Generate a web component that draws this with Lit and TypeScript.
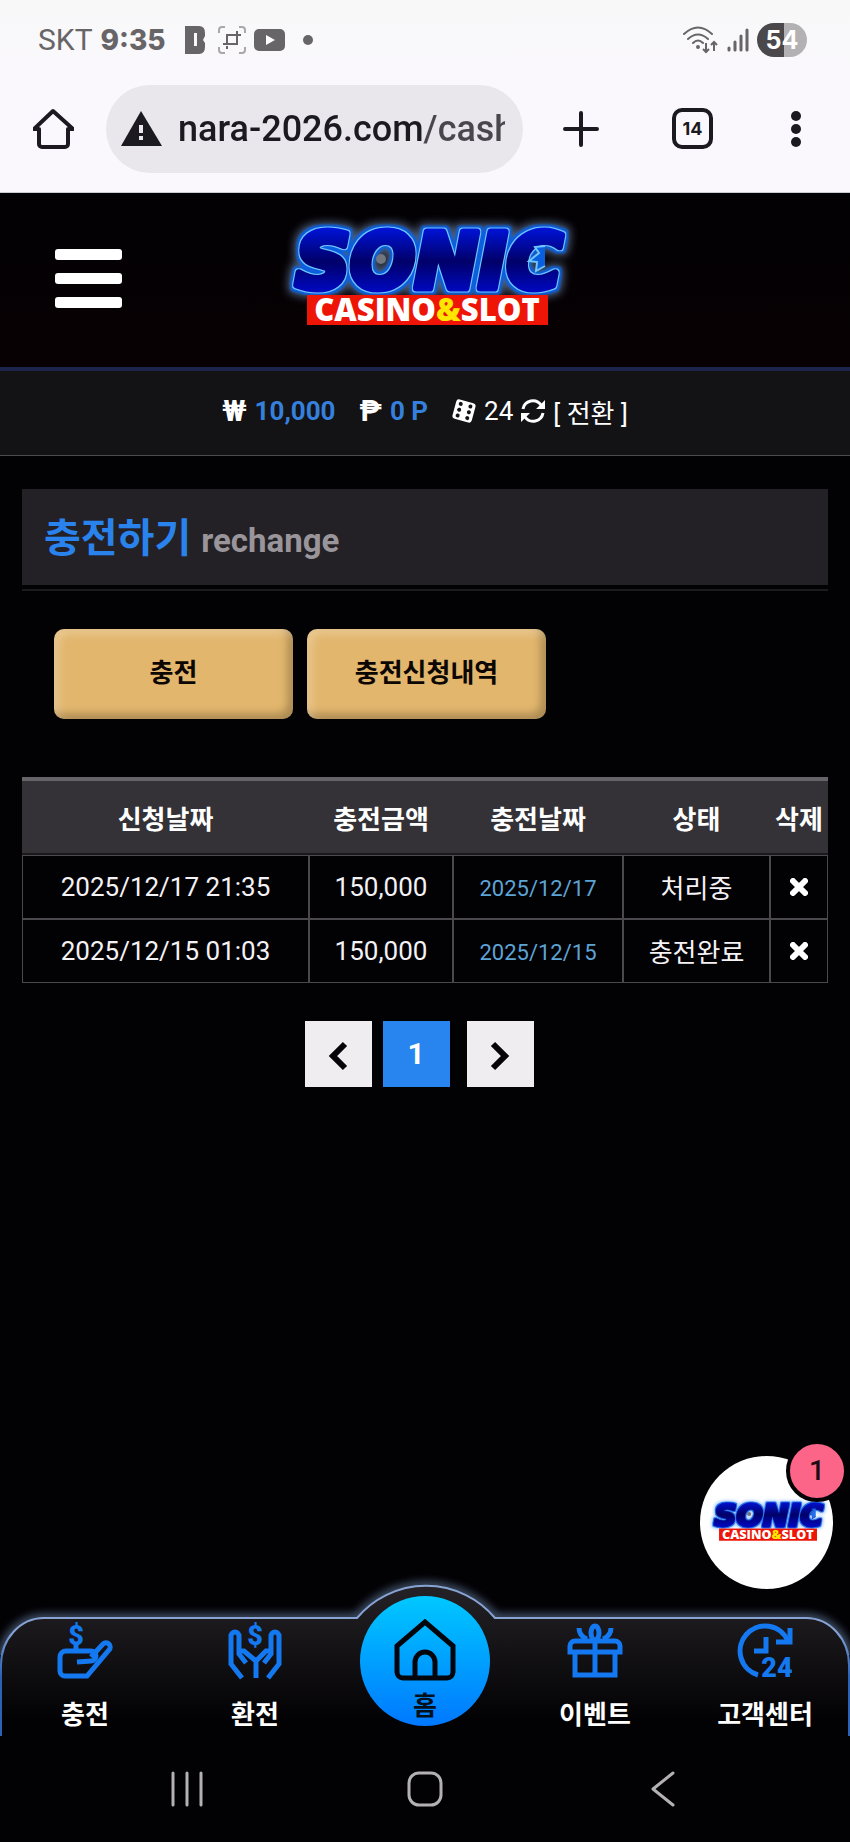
import { LitElement, html, css, svg } from 'lit';
import { customElement, property } from 'lit/decorators.js';

const icons = {
    charge: svg`
        <path d="M33 27H8a6 6 0 0 0-6 6v14a5 5 0 0 0 5 5h22L51 26a4 4 0 0 0-6-6L33 33"/>
        <path d="M33 27a5 5 0 0 1 0 10l-14 1"/>
        <path d="M18 20v6"/>
        <text x="18" y="21" text-anchor="middle">$</text>`,
    exchange: svg`
        <path d="M14 54L3 40V12a4 4 0 0 1 8 0v18l7 9"/>
        <path d="M40 54l11-14V12a4 4 0 0 0-8 0v18l-7 9"/>
        <path d="M11 27h5l12 10v17M43 27h-5L28 37"/>
        <text x="27" y="21" text-anchor="middle">$</text>`,
    event: svg`
        <path d="M2 28V22a5 5 0 0 1 5-5h40a5 5 0 0 1 5 5v6z"/>
        <path d="M7 30v21h40V30M27 15v36"/>
        <ellipse cx="27" cy="9" rx="4" ry="7"/>
        <path d="M11 4c0 6 3 9 8 11M43 4c0 6-3 9-8 11"/>`,
    support: svg`
        <path d="M20 51A25 25 0 1 1 50 17"/>
        <path d="M52 4v14H38M28 13v14H16"/>
        <text x="39" y="53" text-anchor="middle">24</text>`
};

@customElement('site-logo')
export class SiteLogo extends LitElement {

    @property({ type: Boolean, reflect: true }) light = false;

    static styles = css`
        :host { display: block; --halo: #4d5d78; --edge: #0a5fe0; --rim: #6fc6ff; }
        :host([light]) { --halo: #a9ccff; --edge: #2470ea; --rim: #1146c8; }
        svg { display: block; width: 100%; overflow: visible; }
        .name {
            font: oblique 700 76px 'DejaVu Sans', sans-serif;
            fill: url(#face);
            stroke: url(#face);
            stroke-width: 7px;
            stroke-linejoin: round;
            filter: url(#neon);
        }
        .halo { flood-color: var(--halo); }
        .edge { flood-color: var(--edge); }
        .rim { flood-color: var(--rim); }
        .spikes { fill: var(--edge); stroke: var(--rim); stroke-width: 2px; }
        .sub { font: 800 31px 'Open Sans', sans-serif; fill: #fff; }
        .amp { fill: #ffe600; }
    `;

    render() {
        return html`
        <svg viewBox="0 0 310 140" role="img" aria-label="SONIC CASINO&SLOT">
            <defs>
                <linearGradient id="face" x1="0" y1="0" x2="0" y2="1">
                    <stop offset="0.1" stop-color="#0014e0"/>
                    <stop offset="0.5" stop-color="#000068"/>
                    <stop offset="0.9" stop-color="#000ad0"/>
                </linearGradient>
                <filter id="neon" x="-10%" y="-20%" width="120%" height="140%" color-interpolation-filters="sRGB">
                    <feMorphology in="SourceAlpha" operator="dilate" radius="5" result="wide"/>
                    <feGaussianBlur in="wide" stdDeviation="4" result="soft"/>
                    <feFlood class="halo"/><feComposite in2="soft" operator="in" result="halo"/>
                    <feMorphology in="SourceAlpha" operator="dilate" radius="3" result="mid"/>
                    <feGaussianBlur in="mid" stdDeviation="1" result="midsoft"/>
                    <feFlood class="edge"/><feComposite in2="midsoft" operator="in" result="edge"/>
                    <feMorphology in="SourceAlpha" operator="dilate" radius="1" result="thin"/>
                    <feFlood class="rim"/><feComposite in2="thin" operator="in" result="rim"/>
                    <feMerge>
                        <feMergeNode in="halo"/><feMergeNode in="edge"/><feMergeNode in="rim"/><feMergeNode in="SourceGraphic"/>
                    </feMerge>
                </filter>
            </defs>
            <text class="name" x="159" y="78" text-anchor="middle">SONIC</text>
            <path class="spikes" d="M275 36l-10 1 4 6-10 8 8 1-1 9 9-5"/>
            <circle cx="111" cy="49" r="5" fill="#70757f"/>
            <rect x="37" y="85" width="241" height="30" fill="#ee1506"/>
            <text class="sub" x="157" y="111" text-anchor="middle">CASINO<tspan class="amp">&amp;</tspan>SLOT</text>
        </svg>
        `;
    }
}

@customElement('phone-status')
export class PhoneStatus extends LitElement {

    static styles = css`
        :host {
            display: flex;
            align-items: center;
            justify-content: space-between;
            height: 80px;
            padding: 0 43px 0 38px;
            color: #676568;
            font-family: Roboto, sans-serif;
            background: linear-gradient(#f8f8f8, #faf8fd);
        }
        .side { display: flex; align-items: center; gap: 8px; }
        .carrier { font-size: 30px; font-weight: 400; }
        .time { font: 800 28px Inter, sans-serif; margin-right: 10px; }
        .dot { width: 10px; height: 10px; border-radius: 50%; margin-left: 10px; background: #676568; }
        .battery {
            display: flex;
            align-items: center;
            justify-content: center;
            width: 50px;
            height: 34px;
            border-radius: 17px;
            color: #fff;
            font: 700 25px Inter, sans-serif;
            background: linear-gradient(to right, #4a484b 54%, #b3b1b4 54%);
        }
        svg { display: block; }
    `;

    render() {
        return html`
        <div class="side">
            <span class="carrier">SKT</span>
            <span class="time">9:35</span>
            <svg width="26" height="28" viewBox="0 0 26 28">
                <path fill="#676568" fill-rule="evenodd" d="M1 0h14q6 0 6 7v3l-2 4 2 3v4q0 7-6 7H1zM10 7v13h3V7z"/>
            </svg>
            <svg width="28" height="28" viewBox="0 0 28 28" fill="none" stroke="#a9a7ab" stroke-width="2">
                <path d="M1 7V4a3 3 0 0 1 3-3h3M21 1h3a3 3 0 0 1 3 3v3M27 21v3a3 3 0 0 1-3 3h-3M7 27H4a3 3 0 0 1-3-3v-3"/>
                <path stroke="#676568" d="M9 18V9h14M5 18h14V9M9 20v3M19 5v3"/>
            </svg>
            <svg width="31" height="22" viewBox="0 0 31 22">
                <rect width="31" height="22" rx="5" fill="#676568"/>
                <path d="M12 6l9 5-9 5z" fill="#fff"/>
            </svg>
            <span class="dot"></span>
        </div>
        <div class="side">
            <svg width="36" height="28" viewBox="0 0 36 28" fill="none" stroke="#676568" stroke-width="2">
                <path d="M1 8q14-13 28 0M5 13q10-9 20 0M10 17q5-5 10 0" stroke-linecap="round"/>
                <circle cx="15" cy="21" r="1"/>
                <path d="M23 17v9M20 23l3 3 3-3M31 25v-9M28 19l3-3 3 3"/>
            </svg>
            <svg width="22" height="24" viewBox="0 0 22 24" stroke="#676568" stroke-width="3" stroke-linecap="round">
                <path d="M2 20v2M8 14v8M14 8v14M20 2v20"/>
            </svg>
            <span class="battery">54</span>
        </div>
        `;
    }
}

@customElement('browser-bar')
export class BrowserBar extends LitElement {

    static styles = css`
        :host {
            display: flex;
            align-items: center;
            height: 97px;
            padding: 0 44px 15px 33px;
            border-bottom: 1px solid #c9ccd0;
            background: #faf8fd;
        }
        button {
            display: block;
            flex: none;
            padding: 0;
            border: 0;
            color: #1b1a20;
            background: none;
        }
        svg { display: block; }
        .address {
            flex: 1;
            min-width: 0;
            display: flex;
            align-items: center;
            gap: 16px;
            height: 88px;
            margin: 0 40px 0 32px;
            padding: 0 18px 0 15px;
            box-sizing: border-box;
            border-radius: 44px;
            background: #e9e7ec;
        }
        input {
            flex: 1;
            min-width: 0;
            height: 60px;
            padding: 0;
            border: 0;
            outline: 0;
            font: 500 36px Roboto, sans-serif;
            background: linear-gradient(to right, #1b1a20 246px, #49474d 246px);
            background-clip: text;
            -webkit-background-clip: text;
            -webkit-text-fill-color: transparent;
        }
        .tabs {
            width: 41px;
            height: 41px;
            margin: 0 73px;
            border: 4px solid #1b1a20;
            border-radius: 10px;
            font: 700 18px Inter, sans-serif;
        }
    `;

    render() {
        return html`
        <button aria-label="홈">
            <svg width="41" height="41" viewBox="0 0 41 41" fill="none" stroke="currentColor" stroke-width="4" stroke-linejoin="round">
                <path d="M1 21h5v15a3 3 0 0 0 3 3h23a3 3 0 0 0 3-3V21h5L20 3z"/>
            </svg>
        </button>
        <div class="address">
            <svg width="41" height="36" viewBox="0 0 41 36">
                <path d="M20 0l21 35H0z" fill="#1b1a20"/>
                <path d="M18 14h4v8h-4zM18 25h4v4h-4z" fill="#e9e7ec"/>
            </svg>
            <input type="text" aria-label="주소" value="nara-2026.com/cash">
        </div>
        <button aria-label="새 탭">
            <svg width="36" height="36" viewBox="0 0 36 36" stroke="currentColor" stroke-width="4" stroke-linecap="round">
                <path d="M18 2v32M2 18h32"/>
            </svg>
        </button>
        <button class="tabs">14</button>
        <button aria-label="메뉴">
            <svg width="20" height="36" viewBox="0 0 20 36" fill="currentColor">
                <circle cx="10" cy="5" r="5"/><circle cx="10" cy="18" r="5"/><circle cx="10" cy="31" r="5"/>
            </svg>
        </button>
        `;
    }
}

@customElement('balance-bar')
export class BalanceBar extends LitElement {

    static styles = css`
        :host {
            display: flex;
            align-items: center;
            justify-content: center;
            gap: 8px;
            height: 85px;
            padding-bottom: 4px;
            box-sizing: border-box;
            border-bottom: 1px solid #4d4b4f;
            color: #fff;
            font: 400 26px/32px Roboto, 'Noto Sans CJK KR', sans-serif;
            background: #131215;
        }
        svg { display: block; }
        .sign { font-size: 30px; font-weight: 700; }
        .amount { color: #3580dc; font-weight: 700; margin-right: 16px; }
        button {
            padding: 6px 0 0;
            border: 0;
            color: inherit;
            font: inherit;
            background: none;
        }
    `;

    render() {
        return html`
        <span class="sign">₩</span><span class="amount">10,000</span>
        <span class="sign">₱</span><span class="amount">0 P</span>
        <svg width="24" height="24" viewBox="0 0 24 24">
            <g transform="rotate(15 12 12)">
                <rect x="2" y="2" width="20" height="20" rx="3" fill="#fff"/>
                <g fill="#131215">
                    <circle cx="7" cy="6" r="2"/><circle cx="7" cy="12" r="2"/><circle cx="7" cy="18" r="2"/>
                    <circle cx="17" cy="6" r="2"/><circle cx="17" cy="12" r="2"/><circle cx="17" cy="18" r="2"/>
                </g>
            </g>
        </svg>
        <span>24</span>
        <svg width="24" height="24" viewBox="0 0 24 24">
            <path d="M2 10a10 10 0 0 1 18-4M22 14a10 10 0 0 1-18 4" fill="none" stroke="#fff" stroke-width="3"/>
            <path d="M24 1v9h-9zM0 23v-9h9z" fill="#fff"/>
        </svg>
        <button>[ 전환 ]</button>
        `;
    }
}

@customElement('charge-table')
export class ChargeTable extends LitElement {

    @property({ attribute: false }) rows: string[][] = [];

    static styles = css`
        :host { display: block; }
        table {
            width: 100%;
            table-layout: fixed;
            border-collapse: separate;
            border-spacing: 0;
            color: #f4f2f5;
            font: 400 26px/32px Roboto, 'Noto Sans CJK KR', sans-serif;
            text-align: center;
        }
        th {
            height: 66px;
            padding: 6px 0 0;
            border-top: 4px solid #666468;
            border-bottom: 2px solid #19181a;
            color: #fff;
            background: #343236;
            white-space: nowrap;
        }
        td {
            height: 62px;
            padding: 0;
            border: 1px solid #4b494d;
        }
        .sum { width: 144px; }
        .paid { width: 170px; }
        .state { width: 147px; }
        .erase { width: 58px; }
        .low { height: 58px; padding: 4px 0 0; }
        .high { height: 58px; padding: 0 0 4px; }
        .day { height: 58px; padding: 4px 0 0; color: #5da4d6; font-size: 22px; }
        button { padding: 0; border: 0; background: none; vertical-align: middle; }
        svg { display: block; }
    `;

    render() {
        return html`
        <table>
            <thead>
                <tr>
                    <th>신청날짜</th>
                    <th class="sum">충전금액</th>
                    <th class="paid">충전날짜</th>
                    <th class="state">상태</th>
                    <th class="erase">삭제</th>
                </tr>
            </thead>
            <tbody>
                ${this.rows.map(([asked, sum, day, state]) => html`
                <tr>
                    <td>${asked}</td>
                    <td>${sum}</td>
                    <td class="day">${day}</td>
                    <td class="low">${state}</td>
                    <td class="high">
                        <button aria-label="삭제">
                            <svg width="18" height="18" viewBox="0 0 18 18" stroke="#fff" stroke-width="6" stroke-linecap="round">
                                <path d="M3 3l12 12M15 3L3 15"/>
                            </svg>
                        </button>
                    </td>
                </tr>`)}
            </tbody>
        </table>
        `;
    }
}

@customElement('tab-menu')
export class TabMenu extends LitElement {

    static styles = css`
        :host {
            display: block;
            position: relative;
            height: 151px;
            font: 700 26px/34px Roboto, 'Noto Sans CJK KR', sans-serif;
        }
        .shape {
            position: absolute;
            inset: 0;
            width: 100%;
            height: 100%;
            overflow: visible;
        }
        .line { fill: none; stroke: url(#rim); stroke-width: 2px; vector-effect: non-scaling-stroke; }
        .glow { fill: none; stroke: #8fb4e4; stroke-width: 5px; opacity: 0.8; }
        nav {
            position: relative;
            display: grid;
            grid-template-columns: repeat(5, 1fr);
            justify-items: center;
            align-items: start;
        }
        a {
            display: flex;
            flex-direction: column;
            align-items: center;
            gap: 20px;
            padding-top: 39px;
            color: #fff;
            text-decoration: none;
        }
        .icon {
            width: 54px;
            height: 54px;
            overflow: visible;
            fill: none;
            stroke: #1479f0;
            stroke-width: 5px;
        }
        .icon text { font: 900 27px Roboto, sans-serif; fill: #1479f0; stroke: none; }
        .home {
            gap: 8px;
            width: 130px;
            height: 130px;
            margin-top: 11px;
            padding-top: 23px;
            box-sizing: border-box;
            border-radius: 50%;
            color: #04101c;
            background: linear-gradient(#00c8ff, #0078ff);
        }
        .house { width: 62px; height: 62px; flex: none; fill: none; stroke: #02060c; stroke-width: 5px; }
    `;

    item(icon: unknown, label: string) {
        return html`
        <a href="#">
            <svg class="icon" viewBox="0 0 54 54">${icon}</svg>
            <span>${label}</span>
        </a>`;
    }

    render() {
        const rim = 'M1 151V80A43 47 0 0 1 44 33H357A90 90 0 0 1 495 33H806A43 47 0 0 1 849 80V151';
        return html`
        <svg class="shape" viewBox="0 0 850 151" preserveAspectRatio="none" aria-hidden="true">
            <defs>
                <linearGradient id="fill" x1="0" y1="0" x2="0" y2="1">
                    <stop offset="0" stop-color="#242226"/>
                    <stop offset="0.9" stop-color="#020103"/>
                </linearGradient>
                <linearGradient id="rim" x1="0" y1="0" x2="0" y2="1">
                    <stop offset="0.3" stop-color="#86a3d4"/>
                    <stop offset="0.6" stop-color="#2c62b4"/>
                </linearGradient>
                <filter id="blur" x="-5%" y="-20%" width="110%" height="140%">
                    <feGaussianBlur stdDeviation="5"/>
                </filter>
                <clipPath id="above"><path d="M0 -30H850V70H0z"/></clipPath>
            </defs>
            <g clip-path="url(#above)"><path class="glow" d=${rim} filter="url(#blur)"/></g>
            <path d="${rim}z" fill="url(#fill)"/>
            <path class="line" d=${rim}/>
        </svg>
        <nav>
            ${this.item(icons.charge, '충전')}
            ${this.item(icons.exchange, '환전')}
            <a class="home" href="#">
                <svg class="house" viewBox="0 0 62 62">
                    <path d="M3 53V27L31 3l28 24v26a6 6 0 0 1-6 6H9a6 6 0 0 1-6-6z"/>
                    <path d="M21 59V43a10 10 0 0 1 20 0v16"/>
                </svg>
                <span>홈</span>
            </a>
            ${this.item(icons.event, '이벤트')}
            ${this.item(icons.support, '고객센터')}
        </nav>
        `;
    }
}

@customElement('app-root')
export class AppRoot extends LitElement {

    rows = [
        ['2025/12/17 21:35', '150,000', '2025/12/17', '처리중'],
        ['2025/12/15 01:03', '150,000', '2025/12/15', '충전완료']
    ];

    static styles = css`
        :host {
            display: flex;
            flex-direction: column;
            min-height: 100vh;
            color: #fff;
            font: 400 26px/32px Roboto, 'Noto Sans CJK KR', sans-serif;
            background: #020104;
        }
        button { font: inherit; border: 0; padding: 0; }
        svg { display: block; }
        header {
            display: grid;
            grid-template-columns: 1fr 310px 1fr;
            align-items: center;
            height: 174px;
            padding: 0 55px;
            border-bottom: 4px solid #1c2549;
            background: linear-gradient(#020104, #080103);
        }
        .burger {
            display: flex;
            flex-direction: column;
            gap: 13px;
            width: 67px;
            padding-bottom: 3px;
            background: none;
        }
        .burger span { height: 11px; border-radius: 3px; background: #fff; }
        main {
            position: relative;
            flex: 1;
            padding: 33px 22px 0;
        }
        .title {
            display: flex;
            align-items: baseline;
            gap: 10px;
            height: 96px;
            margin-bottom: 4px;
            padding: 0 22px;
            background: #232125;
        }
        h1 { margin: 0; color: #2a83ec; font-size: 40px; line-height: 100px; }
        .title span { color: #99959b; font-size: 33px; font-weight: 700; }
        .rule { height: 2px; background: #1b1a1d; }
        .actions { display: flex; gap: 14px; padding: 38px 32px 58px; }
        .actions button {
            width: 239px;
            height: 90px;
            padding-bottom: 2px;
            border-radius: 10px;
            color: #0c0703;
            font-weight: 700;
            background: #e2b66d;
            box-shadow: inset 5px 5px 8px rgba(255, 255, 255, 0.25), inset -5px -5px 8px rgba(0, 0, 0, 0.25);
        }
        .pages {
            display: flex;
            justify-content: center;
            gap: 11px;
            padding: 38px 12px 0 0;
        }
        .pages button {
            display: flex;
            align-items: center;
            justify-content: center;
            width: 67px;
            height: 66px;
            padding-top: 4px;
            color: #060408;
            background: #efedef;
        }
        .pages .current { padding: 0; color: #fff; font-size: 30px; font-weight: 700; background: #2884ee; }
        .pages .next { margin-left: 6px; }
        .chat {
            position: absolute;
            right: 17px;
            bottom: -4px;
            display: flex;
            align-items: center;
            justify-content: center;
            width: 133px;
            height: 133px;
            border-radius: 50%;
            background: #fff;
        }
        .chat site-logo { width: 126px; }
        .badge {
            position: absolute;
            top: -16px;
            right: -15px;
            width: 54px;
            height: 54px;
            border: 4px solid #020104;
            border-radius: 50%;
            color: #1c0c14;
            font-size: 28px;
            font-weight: 500;
            line-height: 54px;
            background: #fc6587;
        }
        .keys {
            display: grid;
            grid-template-columns: repeat(3, 1fr);
            place-items: center;
            height: 106px;
            padding: 0 8%;
        }
        .keys button { background: none; }
        .keys svg { fill: none; stroke: #b3b1b3; stroke-width: 3px; stroke-linecap: round; stroke-linejoin: round; }
    `;

    render() {
        return html`
        <phone-status></phone-status>
        <browser-bar></browser-bar>
        <header>
            <button class="burger" aria-label="메뉴"><span></span><span></span><span></span></button>
            <site-logo></site-logo>
        </header>
        <balance-bar></balance-bar>
        <main>
            <div class="title"><h1>충전하기</h1><span>rechange</span></div>
            <div class="rule"></div>
            <div class="actions">
                <button>충전</button>
                <button>충전신청내역</button>
            </div>
            <charge-table .rows=${this.rows}></charge-table>
            <div class="pages">
                <button aria-label="이전">
                    <svg width="20" height="30" viewBox="0 0 20 30" fill="none" stroke="currentColor" stroke-width="6">
                        <path d="M17 3L5 15l12 12"/>
                    </svg>
                </button>
                <button class="current">1</button>
                <button class="next" aria-label="다음">
                    <svg width="20" height="30" viewBox="0 0 20 30" fill="none" stroke="currentColor" stroke-width="6">
                        <path d="M3 3l12 12L3 27"/>
                    </svg>
                </button>
            </div>
            <button class="chat" aria-label="채팅">
                <site-logo light></site-logo>
                <span class="badge">1</span>
            </button>
        </main>
        <tab-menu></tab-menu>
        <div class="keys">
            <button aria-label="최근 앱">
                <svg width="34" height="36" viewBox="0 0 34 36"><path d="M3 2v32M17 2v32M31 2v32"/></svg>
            </button>
            <button aria-label="홈 화면">
                <svg width="36" height="36" viewBox="0 0 36 36"><rect x="2" y="2" width="32" height="32" rx="10"/></svg>
            </button>
            <button aria-label="뒤로">
                <svg width="24" height="36" viewBox="0 0 24 36"><path d="M22 2L2 18l20 16"/></svg>
            </button>
        </div>
        `;
    }
}
